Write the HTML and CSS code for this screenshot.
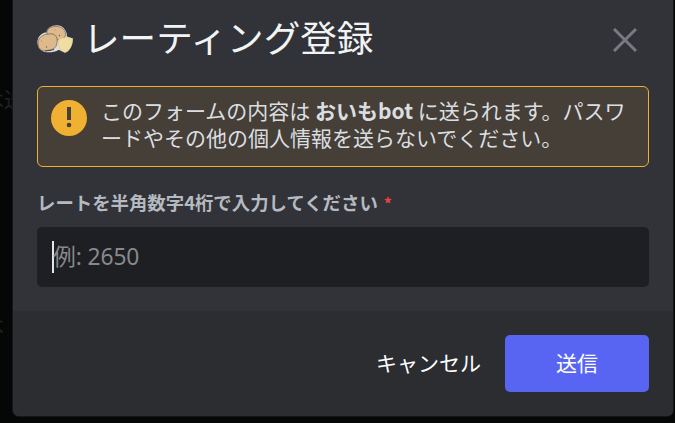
FILE: index.html
```
<!DOCTYPE html>
<html lang="ja">
<head>
<meta charset="utf-8">
<title>レーティング登録</title>
<link rel="stylesheet" href="styles.css">
</head>
<body>
<span class="behind behind-top">は送</span>
<span class="behind behind-bottom">は</span>
<main class="modal">
  <header class="header">
    <svg class="potato" viewBox="0 0 36 28" aria-hidden="true">
      <path d="M1 16C2 10 7 8 10 8C11 3 15 1 20 1C26 1 30 7 29 12L35 14C35 20 32 26 28 27L22 24C18 27 11 27 7 26Q1 24 1 16Z" fill="#deded9" stroke="#deded9" stroke-width="1.4" stroke-linejoin="round"/>
      <path d="M10 10C9 4 14 1 20 1.3C27 2 31 8 27 13L21 15Z" fill="#deb98c" stroke="#6b5e50" stroke-width=".7"/>
      <path d="M1 18C1 12 7 9 12 9C18 8 21 12 20 17C20 22 17 24 13 25C10 25 7 27 4 25Q1 23 1 18Z" fill="#deb98c" stroke="#6b5e50" stroke-width=".7"/>
      <path d="M22 14C25 12.500 31 12.500 35.500 13.500C36 19 33 25 29 27C24 26.500 21 22 21.500 17Z" fill="#f2dda0" stroke="#d8c48c" stroke-width=".5"/>
      <path d="M8 26L13 25.500L17 24.500" fill="none" stroke="#37383b" stroke-width=".9"/>
      <g fill="#705c49"><circle cx="9.500" cy="22" r=".7"/><circle cx="4.500" cy="16" r=".4"/><circle cx="22.500" cy="10.500" r=".7"/><circle cx="18" cy="5" r=".4"/></g>
    </svg>
    <h1 class="title">レーティング登録</h1>
    <svg class="close" viewBox="0 0 24 24" aria-hidden="true"><path d="M1 1L23 23M23 1L1 23"/></svg>
  </header>
  <section class="content">
    <div class="notice">
      <svg class="warning" viewBox="0 0 36 36" aria-hidden="true"><circle cx="18" cy="18" r="18" fill="#f0b132"/><path d="M16 7h4v13h-4z" fill="#453f37"/><circle cx="18" cy="25" r="2.3" fill="#453f37"/></svg>
      <p class="notice-text">このフォームの内容は <strong>おいもbot</strong> に送られます。パスワ<br>ードやその他の個人情報を送らないでください。</p>
    </div>
    <div class="label">レートを半角数字4桁で入力してください<span class="required">*</span></div>
    <div class="field"><span class="caret"></span><span class="placeholder">例: 2650</span></div>
  </section>
  <footer class="footer">
    <button class="cancel">キャンセル</button>
    <button class="submit">送信</button>
  </footer>
</main>
</body>
</html>
```
FILE: styles.css
```
* { box-sizing: border-box; }
body {
  margin: 0;
  width: 675px;
  height: 423px;
  padding: 0 2px 7px 13px;
  overflow: hidden;
  background: #050706;
  font-family: "Noto Sans CJK JP", sans-serif;
}
.behind { position: absolute; left: -17px; color: #202122; font-size: 21px; line-height: 24px; }
.behind-top { top: 86px; }
.behind-bottom { top: 312px; }
.modal {
  position: relative;
  width: 660px;
  height: 416px;
  display: flex;
  flex-direction: column;
  overflow: hidden;
  background: #313338;
  border-radius: 0 0 6px 6px;
  box-shadow: 0 0 0 1px #151619;
}
.header { height: 86px; padding: 0 24px; display: flex; align-items: flex-start; }
.potato { width: 36px; height: 28px; margin-top: 25px; flex: none; }
.title {
  margin: 10px 0 0 10px;
  color: #f2f3f5;
  font-size: 36.6px;
  line-height: 54px;
  font-weight: 400;
  white-space: nowrap;
}
.close { width: 24px; height: 24px; margin: 28px 12px 0 auto; fill: none; stroke: #777a81; stroke-width: 3; }
.content { height: 225px; padding: 0 24px; }
.notice {
  height: 81px;
  padding: 12px 13px;
  display: flex;
  border: 1px solid #f0b132;
  border-radius: 6px;
  background: #453f37;
}
.warning { width: 36px; height: 36px; margin-top: 1px; flex: none; }
.notice-text { margin: -2px 0 0 14px; color: #dbdee1; font-size: 21px; line-height: 27px; white-space: nowrap; }
.label { height: 24px; margin-top: 23px; color: #b5bac1; font-size: 18.4px; line-height: 24px; font-weight: 700; white-space: nowrap; }
.required { margin-left: 6px; color: #f23f42; font-size: 16px; }
.field {
  height: 60px;
  margin-top: 13px;
  padding: 0 15px;
  display: flex;
  align-items: center;
  border-radius: 5px;
  background: #1e1f22;
}
.caret { width: 2px; height: 32px; background: #e3e5e8; }
.placeholder { margin: 0 0 0 -1px; color: #87898c; font-family: "Noto Sans", "Noto Sans CJK JP", sans-serif; font-size: 22.8px; line-height: 30px; letter-spacing: -.1px; white-space: nowrap; }
.footer {
  height: 105px;
  padding: 24px;
  display: flex;
  justify-content: flex-end;
  background: #2b2d31;
}
button { height: 57px; padding: 0 0 2px; border: 0; color: #fff; background: none; font: 400 21px/55px "Noto Sans CJK JP", sans-serif; white-space: nowrap; }
.cancel { margin-right: 24px; }
.submit { width: 144px; border-radius: 5px; background: #5865f2; }
```
